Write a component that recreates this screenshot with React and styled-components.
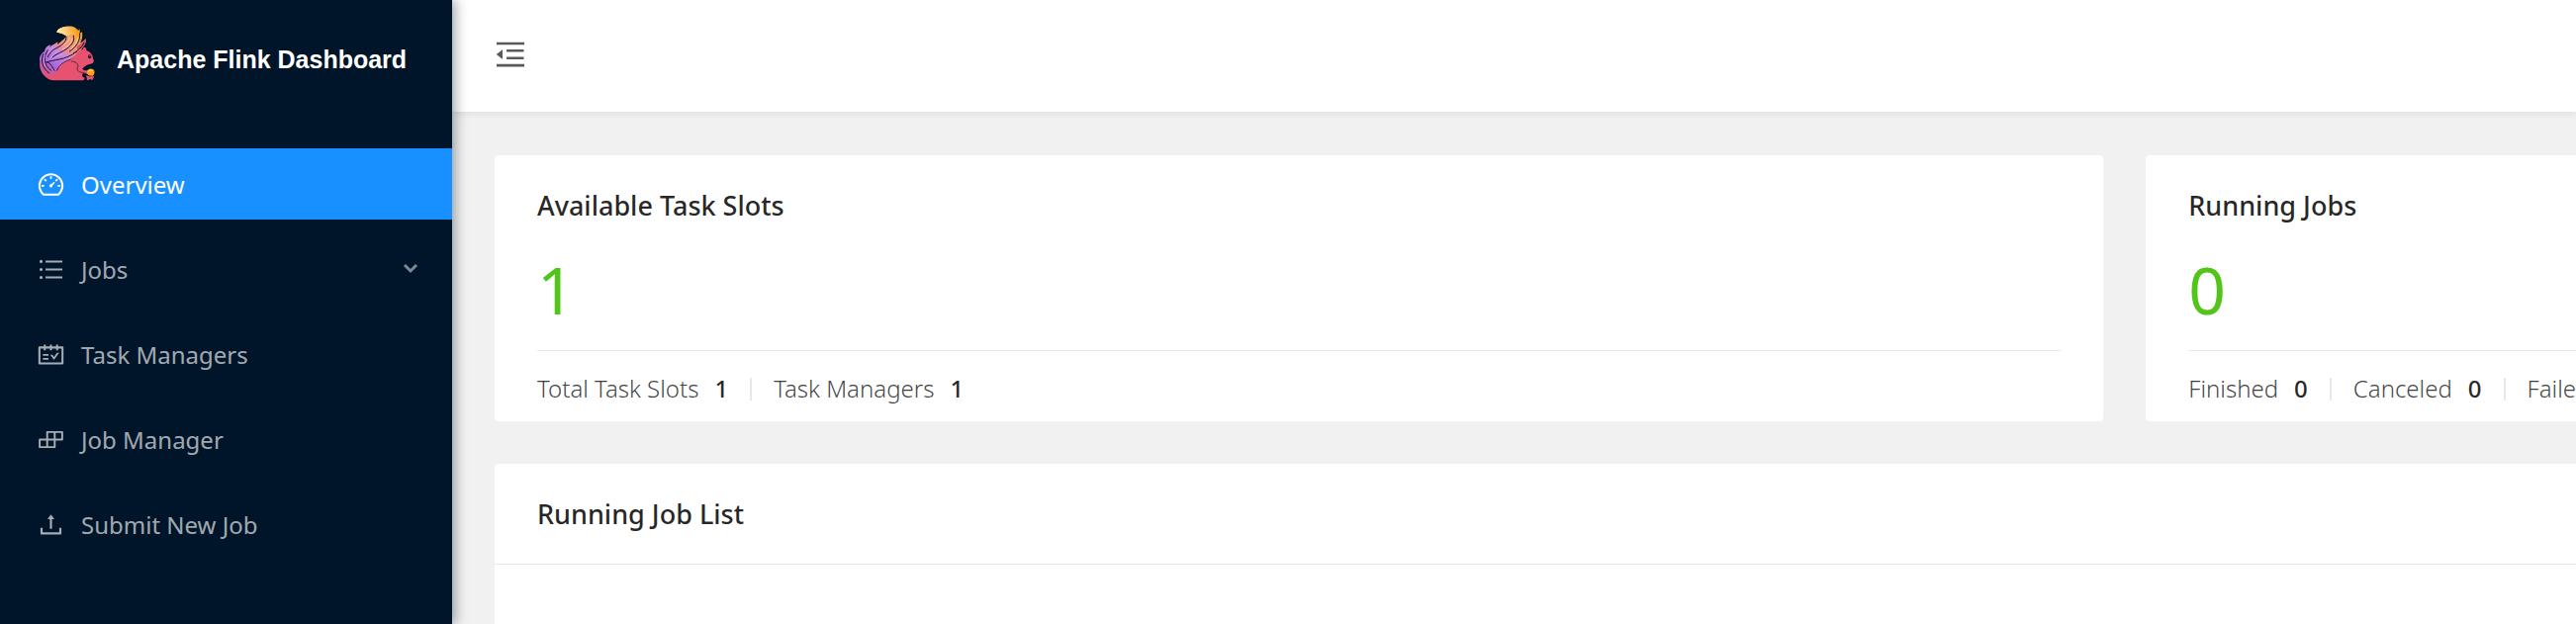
import React from "react";
import styled, { createGlobalStyle } from "styled-components";
import {
  AiOutlineBars,
  AiOutlineBuild,
  AiOutlineDashboard,
  AiOutlineMenuFold,
  AiOutlineSchedule,
  AiOutlineUpload,
} from "react-icons/ai";

const GlobalStyle = createGlobalStyle`
  * { box-sizing: border-box; }
  body {
    margin: 0;
    background: #f1f1f1;
    color: rgba(0, 0, 0, 0.85);
    font-family: "Noto Sans", "Open Sans", sans-serif;
    font-size: 24px;
  }
`;

const Layout = styled.div`
  display: flex;
  min-height: 100vh;
`;

const Sidebar = styled.aside`
  position: relative;
  z-index: 2;
  flex: 0 0 457px;
  background: #001529;
  box-shadow: 4px 0 11px rgba(0, 21, 41, 0.35);
`;

const Brand = styled.a`
  display: flex;
  align-items: flex-end;
  gap: 17px;
  padding: 20px 24px 0 35px;
  color: #fff;
  text-decoration: none;
`;

const BrandName = styled.h1`
  margin: 0;
  font: 700 25px/52px "Liberation Sans", Arial, sans-serif;
  white-space: nowrap;
`;

const Menu = styled.ul`
  display: flex;
  flex-direction: column;
  gap: 14px;
  margin: 64px 0 0;
  padding: 0;
  list-style: none;
`;

const MenuLink = styled.a`
  display: flex;
  align-items: center;
  gap: 16px;
  height: 72px;
  padding: 0 30px 0 37px;
  color: ${(p) => (p.$active ? "#fff" : "rgba(255, 255, 255, 0.65)")};
  background: ${(p) => (p.$active ? "#1890ff" : "transparent")};
  text-decoration: none;
`;

const MenuLabel = styled.span`
  flex: 1;
`;

const Main = styled.div`
  flex: 1;
  min-width: 0;
  display: flex;
  flex-direction: column;
  overflow: hidden;
`;

const Header = styled.header`
  display: flex;
  align-items: center;
  height: 113px;
  padding: 0 41px 3px;
  background: #fff;
  box-shadow: 0 2px 7px rgba(0, 21, 41, 0.08);
`;

const FoldButton = styled.button`
  display: flex;
  padding: 0;
  border: 0;
  background: none;
  color: rgba(0, 0, 0, 0.65);
  cursor: pointer;
`;

/* The dashboard is wider than the window and runs off its right edge. */
const Content = styled.main`
  flex: 1;
  display: flex;
  flex-direction: column;
  gap: 43px;
  width: 157.5%;
  padding: 44px 43px 0;
`;

const StatGrid = styled.div`
  display: grid;
  grid-template-columns: 1fr 1fr;
  gap: 43px;
`;

const StatCard = styled.section`
  padding: 28px 43px 13px;
  background: #fff;
  border-radius: 4px;
`;

const CardTitle = styled.h2`
  margin: 0;
  font-size: 27px;
  font-weight: 500;
  line-height: 46px;
`;

const StatValue = styled.div`
  margin: 12px 0 13px;
  color: #52c41a;
  font-size: 66px;
  line-height: 98px;
`;

const StatFooter = styled.dl`
  display: flex;
  align-items: center;
  margin: 0;
  padding-top: 18px;
  border-top: 1px solid #e8e8e8;
  line-height: 40px;
`;

const StatItem = styled.div`
  display: flex;
  align-items: center;

  & + &::before {
    content: "";
    width: 2px;
    height: 23px;
    margin: 0 22px;
    background: #e8e8e8;
  }
`;

const StatLabel = styled.dt`
  color: rgba(0, 0, 0, 0.75);
  font-weight: 300;
`;

const StatNumber = styled.dd`
  margin: 0 0 0 16px;
  font-weight: 500;
`;

const ListCard = styled.section`
  flex: 1;
  background: #fff;
  border-radius: 4px 4px 0 0;
`;

const ListHeader = styled.div`
  padding: 28px 43px 27px;
  border-bottom: 1px solid #e8e8e8;
`;

function SquirrelLogo() {
  return (
    <svg width="66" height="66" viewBox="0 0 198 198" aria-hidden="true">
      <defs>
        <linearGradient id="tail" x1="0.8" y1="0" x2="0.2" y2="1">
          <stop offset="0" stopColor="#f9a11b" />
          <stop offset="0.25" stopColor="#f2a06a" />
          <stop offset="0.42" stopColor="#ee8a8c" />
          <stop offset="0.52" stopColor="#c987dc" />
          <stop offset="0.76" stopColor="#a865dd" />
          <stop offset="1" stopColor="#e6526f" />
        </linearGradient>
        <linearGradient id="tip" x1="0" y1="0.4" x2="1" y2="0.2">
          <stop offset="0" stopColor="#fff0b8" />
          <stop offset="0.5" stopColor="#fbc56d" />
          <stop offset="1" stopColor="#f89406" />
        </linearGradient>
      </defs>
      <path
        d="M50 183C25 174 12 150 16 126C12 114 20 102 30 96C31 86 38 79 48 75L45 83C54 75 64 73 70 67L70 75C79 65 92 58 95 50C86 40 76 40 67 38C68 27 83 20 102 20C115 18 128 25 132 33L137 28L137 41L144 37C146 52 144 60 138 70C146 68 151 62 155 57C157 68 152 78 143 88C136 100 124 112 104 122L70 148L72 181Z"
        fill="url(#tail)"
      />
      <path d="M67 38C69 25 88 20 103 20C121 20 130 29 135 45C137 58 129 68 123 76C126 56 118 42 105 47C96 51 86 40 67 38Z" fill="url(#tip)" />
      <path d="M128 82C135 74 149 68 155 57C157 68 152 78 143 88L130 92Z" fill="#d9536f" />
      <path
        d="M34 162C48 172 60 164 70 153C73 139 86 127 104 122C116 117 124 108 129 99C133 93 140 90 146 90C147 85 151 82 154 84C157 87 157 91 158 94C170 98 178 108 177 119C183 125 179 133 165 135C157 137 148 144 145 149C149 154 156 155 163 152L169 160C164 167 154 164 148 161C142 168 145 174 151 175C154 181 148 184 144 184L57 184C47 183 38 174 34 162Z"
        fill="#e6526f"
      />
      <path d="M158 160C158 150 170 146 178 151C184 156 182 166 176 170C168 172 160 169 158 160Z" fill="#f9a11b" />
      <path d="M157 168C164 173 174 173 180 170C182 175 176 177 175 183L168 180L160 184C157 181 160 177 157 174Z" fill="#e6526f" />
      <g fill="none" stroke="#1a1226" strokeLinecap="round" strokeWidth="3">
        <path d="M26 104C18 126 24 148 44 162M40 92C26 112 26 136 50 154M60 154C52 138 44 128 36 128M36 130C56 118 92 126 128 96" />
        <path d="M95 50C101 64 82 78 66 86C52 92 44 103 40 113M118 48C124 65 110 81 88 94C72 103 62 106 54 114M137 42C139 62 128 82 106 96M150 70C144 84 132 92 118 102" />
        <path d="M67 154C74 136 90 126 108 121M112 126C130 127 136 138 129 148M128 150C134 160 144 160 156 163M151 176C146 172 145 168 150 163" strokeWidth="2" />
      </g>
      <g fill="none" stroke="#f7c7ba" strokeLinecap="round" strokeWidth="3">
        <path d="M86 78C98 70 106 62 106 53M84 90C100 81 112 72 114 58M110 88C122 79 130 68 131 54" />
      </g>
      <g fill="none" stroke="#d9b3ef" strokeLinecap="round" strokeWidth="2">
        <path d="M66 98C58 104 53 109 48 118M84 104C72 110 62 113 54 120M31 108C26 120 28 132 32 142M56 84C48 90 44 95 42 100" />
      </g>
      <ellipse cx="167" cy="112" rx="5" ry="6" fill="#1a1226" />
      <circle cx="168" cy="110" r="2" fill="#89959e" />
      <path d="M163 158C166 153 172 152 176 155" fill="none" stroke="#fde08e" strokeWidth="3" />
    </svg>
  );
}

function Chevron() {
  return (
    <svg width="24" height="24" viewBox="0 0 24 24" fill="none" stroke="#7f8994" strokeWidth="3" aria-hidden="true">
      <path d="M6 8l6 6 6-6" />
    </svg>
  );
}

const menuItems = [
  { label: "Overview", Icon: AiOutlineDashboard, active: true },
  { label: "Jobs", Icon: AiOutlineBars, expandable: true },
  { label: "Task Managers", Icon: AiOutlineSchedule },
  { label: "Job Manager", Icon: AiOutlineBuild },
  { label: "Submit New Job", Icon: AiOutlineUpload },
];

const stats = [
  { title: "Available Task Slots", value: 1, items: [["Total Task Slots", 1], ["Task Managers", 1]] },
  { title: "Running Jobs", value: 0, items: [["Finished", 0], ["Canceled", 0], ["Failed", 0]] },
];

export default function App() {
  return (
    <>
      <GlobalStyle />
      <Layout>
        <Sidebar>
          <Brand href="#overview">
            <SquirrelLogo />
            <BrandName>Apache Flink Dashboard</BrandName>
          </Brand>
          <nav>
            <Menu>
              {menuItems.map(({ label, Icon, active, expandable }) => (
                <li key={label}>
                  <MenuLink href="#" $active={active} aria-current={active ? "page" : undefined}>
                    <Icon size={29} aria-hidden="true" />
                    <MenuLabel>{label}</MenuLabel>
                    {expandable && <Chevron />}
                  </MenuLink>
                </li>
              ))}
            </Menu>
          </nav>
        </Sidebar>
        <Main>
          <Header>
            <FoldButton type="button" aria-label="Collapse menu">
              <AiOutlineMenuFold size={36} />
            </FoldButton>
          </Header>
          <Content>
            <StatGrid>
              {stats.map(({ title, value, items }) => (
                <StatCard key={title}>
                  <CardTitle>{title}</CardTitle>
                  <StatValue>{value}</StatValue>
                  <StatFooter>
                    {items.map(([name, count]) => (
                      <StatItem key={name}>
                        <StatLabel>{name}</StatLabel>
                        <StatNumber>{count}</StatNumber>
                      </StatItem>
                    ))}
                  </StatFooter>
                </StatCard>
              ))}
            </StatGrid>
            <ListCard>
              <ListHeader>
                <CardTitle>Running Job List</CardTitle>
              </ListHeader>
            </ListCard>
          </Content>
        </Main>
      </Layout>
    </>
  );
}
